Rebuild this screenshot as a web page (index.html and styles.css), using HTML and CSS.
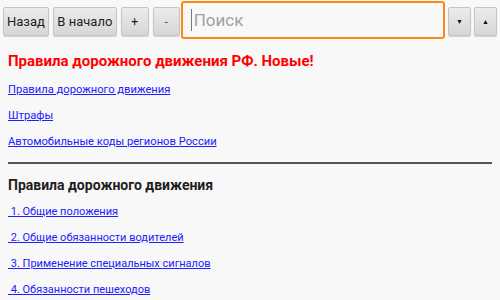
FILE: index.html
```html
<!DOCTYPE html>
<html lang="ru">
<head>
<meta charset="utf-8">
<title>ПДД</title>
<link rel="stylesheet" href="styles.css">
</head>
<body>
<div class="toolbar">
  <button class="btn btn-back">Назад</button>
  <button class="btn btn-home">В начало</button>
  <button class="btn btn-zoom">+</button>
  <button class="btn btn-zoom">-</button>
  <div class="search"><span class="caret"></span><span class="placeholder">Поиск</span></div>
  <button class="btn btn-arrow">&#9660;</button>
  <button class="btn btn-arrow">&#9650;</button>
</div>
<div class="content">
  <h1 class="title">Правила дорожного движения РФ. Новые!</h1>
  <ul class="menu menu-top">
    <li><a href="#">Правила дорожного движения</a></li>
    <li><a href="#">Штрафы</a></li>
    <li><a href="#">Автомобильные коды регионов России</a></li>
  </ul>
  <hr class="divider">
  <h2 class="section">Правила дорожного движения</h2>
  <ul class="menu">
    <li><a href="#">&nbsp;1. Общие положения</a></li>
    <li><a href="#">&nbsp;2. Общие обязанности водителей</a></li>
    <li><a href="#">&nbsp;3. Применение специальных сигналов</a></li>
    <li><a href="#">&nbsp;4. Обязанности пешеходов</a></li>
  </ul>
</div>
</body>
</html>
```

FILE: styles.css
```css
html, body {
  margin: 0;
  padding: 0;
  background: #f8f8f8;
  font-family: Roboto, "Noto Sans", sans-serif;
  overflow: hidden;
}
.toolbar {
  display: flex;
  align-items: flex-start;
  height: 41px;
  padding-left: 3px;
}
.btn {
  box-sizing: border-box;
  height: 29px;
  margin-top: 7px;
  margin-right: 4px;
  padding: 0;
  border: 1px solid #c4c4c4;
  border-radius: 2px;
  background: linear-gradient(#ececec, #d6d6d6);
  box-shadow: 0 1px 1px rgba(0,0,0,0.15);
  font-family: Roboto, "Noto Sans", sans-serif;
  font-size: 13px;
  color: #1e1e1e;
}
.btn-back { width: 46px; }
.btn-home { width: 64px; }
.btn-zoom { width: 28px; font-size: 12px; }
.btn-zoom:nth-of-type(4) { margin-right: 1px; width: 27px; color: #555; }
.btn-arrow { width: 23px; font-size: 7px; margin-right: 3px; color: #111; }
.search {
  box-sizing: border-box;
  width: 265px;
  height: 38px;
  margin-top: 1px;
  margin-right: 3px;
  border: 2px solid #fb8a10;
  border-radius: 3px;
  background: #f8f8f8;
  display: flex;
  align-items: center;
  padding-left: 8px;
}
.caret {
  width: 1px;
  height: 22px;
  background: #777;
  margin-right: 2px;
}
.placeholder {
  font-size: 17px;
  color: #a0a0a0;
}
.content {
  padding: 0 8px;
}
.title {
  margin: 7px 0 3px;
  font-size: 15px;
  line-height: 26px;
  font-weight: bold;
  color: #ff0000;
}
.menu {
  list-style: none;
  margin: 0;
  padding: 0;
}
.menu li {
  font-size: 11px;
  line-height: 26px;
  height: 26px;
}
.menu-top li {
  font-size: 11.2px;
}
.menu a {
  color: #2020ff;
  text-decoration: underline;
}
.divider {
  margin: 7px 0 8px;
  border: 0;
  height: 2px;
  background: #555;
}
.section {
  margin: 0 0 1px;
  font-size: 14px;
  line-height: 26px;
  font-weight: bold;
  color: #1e1e1e;
}
```
